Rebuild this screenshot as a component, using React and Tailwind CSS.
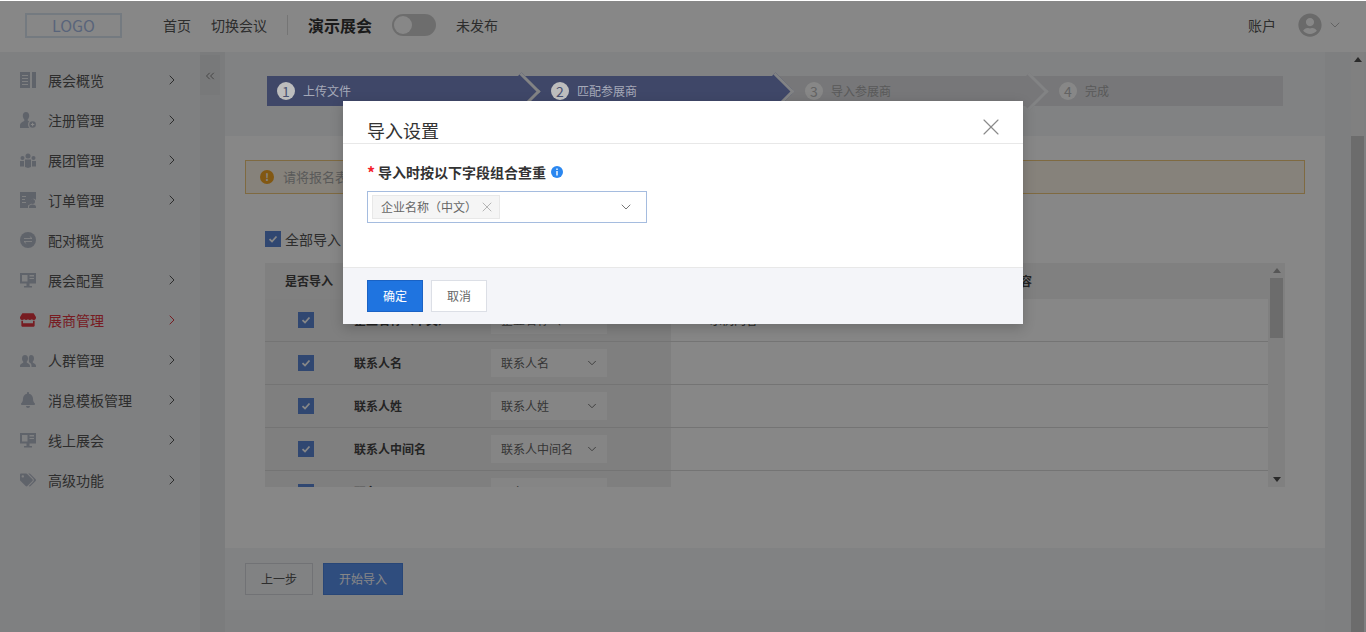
import React from "react";
import { FaBell, FaTags, FaStore, FaUserCircle } from "react-icons/fa";
import { ChevronRight, ChevronDown, ChevronsLeft, X } from "lucide-react";

const font = { fontFamily: '"Noto Sans CJK SC", "Noto Sans", sans-serif' };

const Doc = () => (
  <svg viewBox="0 0 16 16" className="w-4 h-4"><path fill="currentColor" fillRule="evenodd" d="M0 0h10v16H0zM2 3v1h6V3zm0 3v1h6V6zm0 3v1h6V9zm0 3v1h6v-1zM12 0h4v16h-4z" /></svg>
);
const UserAdd = () => (
  <svg viewBox="0 0 16 16" className="w-4 h-4"><path fill="currentColor" d="M6 0c2 0 3.200 1.600 3.200 3.800 0 1.500-.6 2.800-1.500 3.600v1.200c.6.300 1.100.500 1.500.7A4.200 4.200 0 0 0 8 12.500c0 1.300.5 2.500 1.400 3.500H0v-2.800c0-2 3-3.500 4.300-4.100V7.400C3.400 6.600 2.800 5.300 2.800 3.800 2.800 1.600 4 0 6 0z" /><circle cx="12.600" cy="12.500" r="3.300" fill="currentColor" /><path stroke="#fff" strokeWidth="1" d="M12.600 10.800v3.400M10.900 12.500h3.400" /></svg>
);
const Group = () => (
  <svg viewBox="0 0 16 16" className="w-4 h-4"><path fill="currentColor" d="M8 1.500a2.500 2.500 0 1 1 0 5 2.500 2.500 0 0 1 0-5zM5 7.500h6V15l-3 1-3-1zM2.500 4a2 2 0 1 1 0 4 2 2 0 0 1 0-4zM0 9h4v5.500H0zM13.500 4a2 2 0 1 1 0 4 2 2 0 0 1 0-4zM12 9h4v5.500h-4z" /></svg>
);
const Crowd = () => (
  <svg viewBox="0 0 16 16" className="w-4 h-4"><path fill="currentColor" d="M5 3c2 0 3 1.500 3 3.500 0 1.300-.5 2.400-1.200 3v1.200c1.500.6 3.200 1.500 3.200 3.100V15H0v-1.200c0-1.600 1.800-2.500 3.200-3.100V9.500C2.500 8.900 2 7.800 2 6.500 2 4.500 3 3 5 3z" /><path fill="currentColor" d="M11 3c2 0 3 1.500 3 3.500 0 1.300-.5 2.400-1.200 3v1.200c1.500.6 3.200 1.500 3.200 3.100V15h-4.500v-1.500c0-1.500-1.200-2.500-2.500-3.200V9.800C9 8.900 8.800 7.800 8.800 6.500 8.800 4.800 9.500 3 11 3z" /></svg>
);
const Order = () => (
  <svg viewBox="0 0 16 16" className="w-4 h-4"><path fill="currentColor" fillRule="evenodd" d="M0 0h16v8a3 3 0 0 0-5 0 3.500 3.500 0 0 0 .2 3.800L8 13.500V16H0zM2 4v1h4V4zm0 3v1h3V7zm0 3v1h4v-1z" /><circle cx="12.500" cy="9.500" r="2.500" fill="currentColor" /><path fill="currentColor" d="M9 16v-1.500c0-1 1.500-2 3.500-2s3.500 1 3.500 2V16z" /></svg>
);
const Swap = () => (
  <svg viewBox="0 0 16 16" className="w-4 h-4"><circle cx="8" cy="8" r="8" fill="currentColor" /><path stroke="#fff" strokeOpacity=".75" strokeWidth="1" fill="none" d="M4 6.500h8L9.800 4.500M12 9.500H4l2.200 2" /></svg>
);
const Monitor = () => (
  <svg viewBox="0 0 16 16" className="w-4 h-4"><path fill="currentColor" fillRule="evenodd" d="M0 1h16v10.500H9.500V14H12v1.500H4V14h2.500v-2.500H0zM2 3v6.500h5.500V3zm7.500 0v1.500H14V3zm0 3v1H14V6z" /></svg>
);

const menu = [
  ["展会概览", Doc, 1],
  ["注册管理", UserAdd, 1],
  ["展团管理", Group, 1],
  ["订单管理", Order, 1],
  ["配对概览", Swap, 0],
  ["展会配置", Monitor, 1],
  ["展商管理", () => <FaStore className="w-4 h-4" />, 1, 1],
  ["人群管理", Crowd, 1],
  ["消息模板管理", () => <FaBell className="w-4 h-4" />, 1],
  ["线上展会", Monitor, 1],
  ["高级功能", () => <FaTags className="w-4 h-4" />, 1],
];

const steps = [
  ["1", "上传文件", 1],
  ["2", "匹配参展商", 1],
  ["3", "导入参展商", 0],
  ["4", "完成", 0],
];

const Check = () => (
  <span className="w-4 h-4 bg-[#5b87d6] flex items-center justify-center shrink-0">
    <svg viewBox="0 0 16 16" className="w-4 h-4"><path d="M4.500 8.200 7 10.500l4.500-5" stroke="#fff" strokeWidth="1.800" fill="none" /></svg>
  </span>
);

const rows = ["企业名称（中文）", "联系人名", "联系人姓", "联系人中间名", "职务"];

export default function App() {
  return (
    <div style={font} className="relative w-[1366px] h-[632px] overflow-hidden bg-[#f0f1f3] text-[#333] flex flex-col">
      <header className="h-[52px] shrink-0 bg-white flex items-center pb-[2px] text-sm text-[#555]">
        <div className="ml-[25px] w-[97px] h-[25px] border-2 border-[#dce6f2] flex items-center justify-center text-base text-[#a8bde8]">LOGO</div>
        <span className="ml-[41px]">首页</span>
        <span className="ml-5">切换会议</span>
        <span className="ml-5 w-px h-5 bg-[#ddd]" />
        <span className="ml-5 text-base font-bold text-[#333]">演示展会</span>
        <span className="ml-5 w-11 h-[22px] rounded-full bg-[#cfcfcf] p-0.5 flex">
          <span className="w-[18px] h-[18px] rounded-full bg-white" />
        </span>
        <span className="ml-5">未发布</span>
        <span className="ml-auto">账户</span>
        <FaUserCircle className="ml-[22px] w-6 h-6 text-[#c8c8c8]" />
        <ChevronDown className="ml-[5px] mr-[23px] w-4 h-4 text-[#bbb]" strokeWidth={1.500} />
      </header>
      <div className="flex flex-1 min-h-0">
        <aside className="w-[200px] shrink-0 pt-2">
          {menu.map(([label, Icon, arrow, active]) => (
            <div key={label} className={`h-10 flex items-center pl-5 pr-5 text-sm ${active ? "text-[#e0353f]" : "text-[#555]"}`}>
              <span className={active ? "text-[#e0353f]" : "text-[#b4bbc9]"}><Icon /></span>
              <span className="ml-3">{label}</span>
              {arrow ? <ChevronRight className="ml-auto w-4 h-4" strokeWidth={1.500} /> : null}
            </div>
          ))}
        </aside>
        <div className="w-[25px] shrink-0 bg-[#e9eaec]">
          <div className="mt-[3px] w-5 h-10 bg-[#e3e4e6] flex justify-center pt-3.5 text-[#777]">
            <ChevronsLeft className="w-3.5 h-3.5" strokeWidth={1.500} />
          </div>
        </div>
        <main className="w-[1100px] shrink-0 flex flex-col">
          <div className="h-[84px] shrink-0 bg-[#f4f5f8] pt-6 pl-[42px]">
            <div className="w-[1016px] h-[30px] flex bg-[#e0e1e4]">
              {steps.map(([n, t, on], i) => (
                <div key={n} className={`relative flex-1 flex items-center pl-2.5 text-xs ${on ? "bg-[#7887c4]" : "text-[#aaa]"}`}>
                  <span className={`relative w-[18px] h-[18px] rounded-full flex items-center justify-center text-sm ${on ? "z-[7] bg-[#bdbdbd] text-[#4a5272]" : "bg-white text-[#bbb]"} ${i ? "ml-[20px]" : ""}`}>{n}</span>
                  <span className={`relative ml-2 ${on ? "z-[7] text-[#a5a9b8]" : ""}`}>{t}</span>
                  {i < 3 ? <span className={`absolute z-[1] right-[-13.500px] top-[1.500px] w-[27px] h-[27px] rotate-45 border-t-[3px] border-r-[3px] border-[#f6f7f9] ${on ? "bg-[#7887c4]" : "bg-[#e0e1e4]"}`} /> : null}
                </div>
              ))}
            </div>
          </div>
          <div className="flex-1 bg-white px-5 pt-6 min-h-0 overflow-hidden">
            <div className="h-[34px] border border-[#f0c97c] bg-[#fdf6e8] flex items-center pl-3.5 text-xs text-[#aaa]">
              <span className="w-3.5 h-3.5 rounded-full bg-[#f5a623] text-white text-[10px] flex items-center justify-center font-bold">!</span>
              <span className="ml-[9px] text-[13px]">请将报名表</span>
            </div>
            <div className="ml-5 mt-[35px] flex items-center gap-1 text-sm text-[#555]"><Check />全部导入</div>
            <div className="ml-5 mt-[14px] w-[1020px] flex h-[224px] overflow-hidden relative">
              <div className="flex-1 min-w-0">
                <div className="h-9 bg-[#f2f2f2] flex items-center text-xs font-bold text-[#444]">
                  <span className="w-[89px] pl-5">是否导入</span>
                  <span className="ml-[630px]">样例内容</span>
                </div>
                {rows.map((r, i) => (
                  <div key={r} className="h-[43px] flex border-b border-[#dcdcdc] text-xs">
                    <div className="w-[406px] shrink-0 bg-[#f0f0f0] flex items-center">
                      <div className="w-[89px] pl-[33px]"><Check /></div>
                      <div className="w-[137px] font-bold text-[#444]">{r}</div>
                      <div className="w-[116px] h-7 bg-[#fcfcfc] flex items-center pl-2.5 pr-2 text-[#666]">
                        <span className="truncate">{r}</span>
                        <ChevronDown className="ml-auto w-3.5 h-3.5 shrink-0" strokeWidth={1.500} />
                      </div>
                    </div>
                    {i === 0 ? <div className="pl-[39px] flex items-center text-[#555]">示例内容</div> : null}
                  </div>
                ))}
              </div>
              <div className="w-[17px] bg-[#f2f2f2] flex flex-col items-center">
                <span className="mt-[5px] w-0 h-0 border-x-4 border-x-transparent border-b-[5px] border-b-[#a3a3a3]" />
                <span className="mt-[5px] w-[13px] h-[60px] bg-[#cdcdcd]" />
                <span className="mt-auto mb-[5px] w-0 h-0 border-x-4 border-x-transparent border-t-[5px] border-t-[#505050]" />
              </div>
            </div>
          </div>
          <div className="h-[62px] shrink-0 bg-[#f4f5f8] flex items-center pl-5 gap-2.5 text-xs">
            <span className="w-[68px] h-8 border border-[#d5d8dd] flex items-center justify-center text-[#555]">上一步</span>
            <span className="w-20 h-8 bg-[#5a92ef] border border-[#4c85e0] flex items-center justify-center text-white">开始导入</span>
          </div>
          <div className="h-[22px] shrink-0" />
        </main>
        <div className="flex-1 flex justify-end bg-[#eff0f2] pr-0.5">
          <div className="w-[13px] flex flex-col items-center bg-[#f2f2f2]">
            <span className="mt-[5px] w-0 h-0 border-x-4 border-x-transparent border-b-[5px] border-b-[#505050]" />
            <span className="mt-[74px] w-[13px] flex-1 bg-[#cdcdcd]" />
          </div>
        </div>
      </div>

      {/* mask */}
      <div className="absolute inset-0 top-px z-[5] bg-black/47" />

      {/* modal */}
      <div className="absolute z-[6] left-[343px] top-[101px] w-[680px] h-[223px] bg-white flex flex-col shadow-[0_4px_12px_rgba(0,0,0,0.2)]">
        <div className="h-[43px] shrink-0 border-b border-[#e8e8e8] pl-6 pr-6 flex items-end justify-between">
          <span className="text-lg leading-[26px] text-[#333]">导入设置</span>
          <X className="self-start mt-3 -mr-[6px] w-7 h-7 text-[#8a8a8a]" strokeWidth={1} />
        </div>
        <div className="flex-1 pl-6 pt-[18px]">
          <div className="flex items-center h-5 text-sm font-bold text-[#333]">
            <span className="w-[11px] text-[#f5222d] text-base">*</span>
            <span>导入时按以下字段组合查重</span>
            <svg viewBox="0 0 12 12" className="ml-[5px] w-3 h-3"><circle cx="6" cy="6" r="6" fill="#2a87f0" /><path fill="#fff" d="M5.300 2.500h1.400v1.400H5.300zM5.300 5h1.400v4.500H5.300z" /></svg>
          </div>
          <div className="mt-[9px] w-[280px] h-8 border border-[#a5bcdf] flex items-center pl-1 pr-3">
            <span className="h-6 w-[128px] bg-[#f5f5f5] border border-[#e8e8e8] flex items-center pl-2 pr-1 text-xs text-[#666]">
              企业名称（中文）
              <X className="ml-auto w-4 h-4 text-[#aaa]" strokeWidth={1.300} />
            </span>
            <ChevronDown className="ml-auto w-4 h-4 text-[#777]" strokeWidth={1.500} />
          </div>
        </div>
        <div className="h-[57px] shrink-0 border-t border-[#e8e8e8] bg-[#f4f5f9] flex items-center pl-6 gap-2 text-xs">
          <span className="w-14 h-8 bg-[#1f74e0] border border-[#1a62c4] text-white flex items-center justify-center">确定</span>
          <span className="w-14 h-8 bg-white border border-[#dcdfe6] text-[#666] flex items-center justify-center">取消</span>
        </div>
      </div>
    </div>
  );
}
